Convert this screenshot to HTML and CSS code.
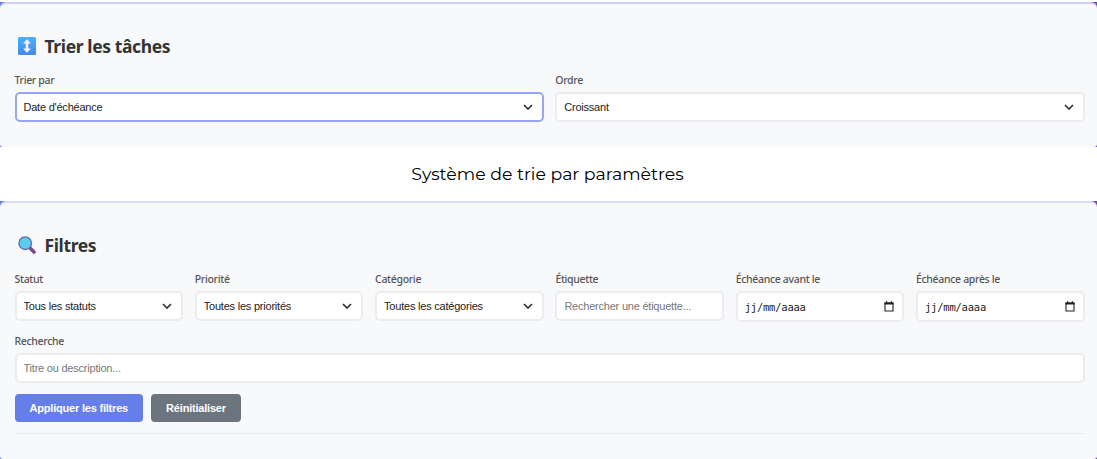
FILE: index.html
```html
<!DOCTYPE html>
<html lang="fr">

<head>
    <meta charset="UTF-8">
    <meta name="viewport" content="width=device-width, initial-scale=1.0">
    <title>Gestion des tâches</title>
    <link rel="stylesheet" href="styles.css">
</head>

<body>
    <div class="frame frame-sort">
        <section class="panel">
            <h2>
                <svg class="title-icon" viewBox="0 0 18 18">
                    <defs>
                        <linearGradient id="blue" x1="0" y1="0" x2="0" y2="1">
                            <stop offset="0" stop-color="#4db0fb"/>
                            <stop offset="1" stop-color="#4389e6"/>
                        </linearGradient>
                    </defs>
                    <rect width="18" height="18" rx="1.5" fill="url(#blue)"/>
                    <path d="M9 2.2L13 6.6H10.3V11.4H13L9 15.8L5 11.4H7.7V6.6H5Z" fill="#f4efff"/>
                </svg>
                <span>Trier les tâches</span>
            </h2>
            <div class="grid-sort">
                <div class="field">
                    <label for="tri">Trier par</label>
                    <div class="select">
                        <select id="tri" class="active"><option>Date d'échéance</option></select>
                        <svg class="arrow" viewBox="0 0 10 6"><path d="M1 1L5 5L9 1"/></svg>
                    </div>
                </div>
                <div class="field">
                    <label for="ordre">Ordre</label>
                    <div class="select">
                        <select id="ordre"><option>Croissant</option></select>
                        <svg class="arrow" viewBox="0 0 10 6"><path d="M1 1L5 5L9 1"/></svg>
                    </div>
                </div>
            </div>
        </section>
    </div>

    <p class="caption">Système de trie par paramètres</p>

    <div class="frame frame-filter">
        <section class="panel">
            <h2>
                <svg class="title-icon" viewBox="0 0 18 18">
                    <path d="M11.5 11.5L16 16" stroke="#7b4a86" stroke-width="3.6" stroke-linecap="round"/>
                    <circle cx="7.2" cy="7.2" r="6.3" fill="#5ccbee" stroke="#5a70a8" stroke-width="1.3"/>
                </svg>
                <span>Filtres</span>
            </h2>
            <div class="grid-filter">
                <div class="field">
                    <label for="statut">Statut</label>
                    <div class="select">
                        <select id="statut"><option>Tous les statuts</option></select>
                        <svg class="arrow" viewBox="0 0 10 6"><path d="M1 1L5 5L9 1"/></svg>
                    </div>
                </div>
                <div class="field">
                    <label for="priorite">Priorité</label>
                    <div class="select">
                        <select id="priorite"><option>Toutes les priorités</option></select>
                        <svg class="arrow" viewBox="0 0 10 6"><path d="M1 1L5 5L9 1"/></svg>
                    </div>
                </div>
                <div class="field">
                    <label for="categorie">Catégorie</label>
                    <div class="select">
                        <select id="categorie"><option>Toutes les catégories</option></select>
                        <svg class="arrow" viewBox="0 0 10 6"><path d="M1 1L5 5L9 1"/></svg>
                    </div>
                </div>
                <div class="field">
                    <label for="etiquette">Étiquette</label>
                    <input type="text" id="etiquette" placeholder="Rechercher une étiquette...">
                </div>
                <div class="field">
                    <label for="avant">Échéance avant le</label>
                    <div class="date">
                        <span id="avant">jj/mm/aaaa</span>
                        <svg class="calendar" viewBox="0 0 10 11"><path d="M1 2H9V10H1Z" fill="none" stroke="#222" stroke-width="1.1"/><path d="M.5 1.5H9.5V3.6H.5ZM2 .3H3.2V2H2ZM6.8 .3H8V2H6.8Z" fill="#222"/></svg>
                    </div>
                </div>
                <div class="field">
                    <label for="apres">Échéance après le</label>
                    <div class="date">
                        <span id="apres">jj/mm/aaaa</span>
                        <svg class="calendar" viewBox="0 0 10 11"><path d="M1 2H9V10H1Z" fill="none" stroke="#222" stroke-width="1.1"/><path d="M.5 1.5H9.5V3.6H.5ZM2 .3H3.2V2H2ZM6.8 .3H8V2H6.8Z" fill="#222"/></svg>
                    </div>
                </div>
            </div>
            <div class="field search">
                <label for="recherche">Recherche</label>
                <input type="text" id="recherche" placeholder="Titre ou description...">
            </div>
            <div class="actions">
                <button class="btn-apply">Appliquer les filtres</button>
                <button class="btn-reset">Réinitialiser</button>
            </div>
            <hr>
        </section>
    </div>
</body>

</html>
```
FILE: styles.css
```css
* {
    box-sizing: border-box;
}

body {
    margin: 0;
    padding-top: 2px;
    height: 459px;
    overflow: hidden;
    background-color: #fff;
    font-family: "Noto Sans", sans-serif;
}

.frame {
    background: linear-gradient(90deg, #667eea, #764ba2);
}

.frame-sort {
    height: 145px;
}

.frame-filter {
    height: 258px;
}

.panel {
    height: 100%;
    padding: 31px 12.5px 0 14.5px;
    border-top: 2px solid #cfcff5;
    border-radius: 6px 6px 3px 3px;
    background-color: #f8f9fb;
}

.frame-filter .panel {
    border-top-color: #dcdcf6;
}

h2 {
    display: flex;
    align-items: center;
    gap: 9px;
    height: 22px;
    margin: 0 0 15px;
    padding-left: 3px;
    color: #333;
    font-size: 17.5px;
    font-weight: 700;
    letter-spacing: -0.38px;
}

.title-icon {
    width: 18px;
    height: 18px;
}

.grid-sort {
    display: grid;
    grid-template-columns: 1fr 1fr;
    gap: 11.5px;
}

.grid-filter {
    display: grid;
    grid-template-columns: repeat(6, 1fr);
    gap: 11.8px;
    height: 55px;
}

label {
    display: block;
    height: 20px;
    color: #555;
    font-size: 10.5px;
    font-weight: 500;
    letter-spacing: -0.33px;
    line-height: 16px;
    white-space: nowrap;
}

.select {
    display: grid;
    align-items: center;
}

.select select,
.select .arrow {
    grid-area: 1 / 1;
}

.arrow {
    width: 10px;
    height: 6px;
    margin-right: 11px;
    justify-self: end;
    fill: none;
    stroke: #333;
    stroke-width: 1.7;
    pointer-events: none;
}

select,
input,
.date {
    appearance: none;
    display: block;
    width: 100%;
    height: 30px;
    padding: 0 7px;
    border: 2px solid #ececee;
    border-radius: 5px;
    outline: none;
    background-color: #fff;
    color: #222;
    font-family: "Liberation Sans", Arial, sans-serif;
    font-size: 11px;
    letter-spacing: -0.22px;
}

select.active {
    border-color: #98a5f0;
}

input::placeholder {
    color: #777;
}

.date {
    display: flex;
    align-items: center;
    justify-content: space-between;
    height: 31px;
    padding-right: 8px;
    font-family: "DejaVu Sans Mono", monospace;
    font-size: 10.5px;
}

.calendar {
    width: 10px;
    height: 11px;
}

.search {
    margin-top: 7px;
}

.actions {
    display: flex;
    gap: 8px;
    margin-top: 11px;
}

button {
    height: 28px;
    padding: 0;
    border: none;
    border-radius: 4px;
    color: #fff;
    font-family: "Liberation Sans", Arial, sans-serif;
    font-size: 11px;
    font-weight: 700;
    letter-spacing: -0.2px;
}

.btn-apply {
    width: 128.5px;
    background-color: #667eea;
}

.btn-reset {
    width: 90px;
    background-color: #6c757d;
}

hr {
    margin: 11px 0 0;
    border: none;
    border-top: 1px solid #e9eaec;
}

.caption {
    height: 54px;
    margin: 0;
    padding-right: 2px;
    color: #000;
    font-family: Montserrat, Inter, sans-serif;
    font-size: 17.33px;
    line-height: 54px;
    text-align: center;
}
```
